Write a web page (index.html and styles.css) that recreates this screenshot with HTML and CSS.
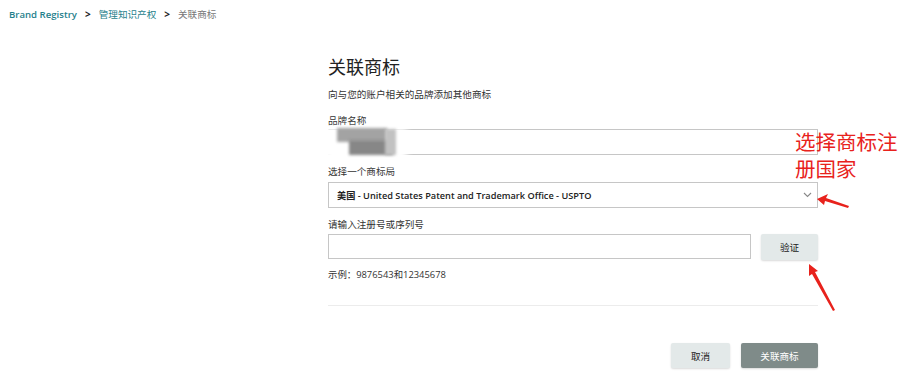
FILE: index.html
```html
<!DOCTYPE html>
<html lang="zh">
<head>
<meta charset="utf-8">
<link rel="stylesheet" href="styles.css">
</head>
<body>
<nav class="crumbs">
  <a class="crumb-link en">Brand Registry</a>
  <span class="sep">&gt;</span>
  <a class="crumb-link">管理知识产权</a>
  <span class="sep">&gt;</span>
  <span class="crumb-cur">关联商标</span>
</nav>
<main class="page">
  <section class="form">
    <h1 class="title">关联商标</h1>
    <p class="sub">向与您的账户相关的品牌添加其他商标</p>
    <label class="lbl first">品牌名称</label>
    <div class="field brand">
      <span class="blur"><i class="b0"></i><i class="b1"></i><i class="b2"></i><i class="b3"></i></span>
    </div>
    <label class="lbl">选择一个商标局</label>
    <div class="field select">
      <span>美国 - United States Patent and Trademark Office - USPTO</span>
      <svg class="chev" width="9" height="6" viewBox="0 0 9 6"><path d="M1 1l3.5 3.5L8 1" fill="none" stroke="#888" stroke-width="1.1"/></svg>
    </div>
    <label class="lbl">请输入注册号或序列号</label>
    <div class="row">
      <div class="field num"></div>
      <button class="btn verify">验证</button>
    </div>
    <p class="hint">示例：9876543和12345678</p>
    <hr class="rule">
    <div class="actions">
      <button class="btn cancel">取消</button>
      <button class="btn primary">关联商标</button>
    </div>
  </section>
</main>
<div class="note">选择商标注<br>册国家</div>
<svg class="arrow a1" width="40" height="20" viewBox="0 0 40 20"><path d="M0 5 L11 0 L9 4 L32 12 L31 14 L8 7 L7 11 Z" fill="#e8221c"/></svg>
<svg class="arrow a2" width="32" height="48" viewBox="0 0 32 48"><path d="M2 0 L11 7 L8 8 L28 46 L26 47 L5 10 L2 12 Z" fill="#e8221c"/></svg>
</body>
</html>
```
FILE: styles.css
```css
* { box-sizing: border-box; }
html, body { margin: 0; padding: 0; background: #fff; }
body {
  width: 899px; height: 387px; overflow: hidden; position: relative;
  font-family: "Noto Sans CJK SC", "Open Sans", sans-serif;
  color: #222;
}
.crumbs {
  display: flex; align-items: center; gap: 5px;
  padding: 6px 0 0 9px; height: 22px;
  font-family: "Open Sans", "Noto Sans CJK SC", sans-serif;
  font-size: 9.6px;
}
.crumb-link { color: #1f7f8c; font-family: "Noto Sans CJK SC", sans-serif; }
.crumb-link.en { font-family: "Open Sans", sans-serif; font-weight: 600; }
.sep { color: #222; font-weight: 700; font-size: 10px; padding: 0 3px; }
.crumb-cur { color: #777; font-family: "Noto Sans CJK SC", sans-serif; }
.page { display: flex; padding-left: 328px; }
.form { width: 490px; display: flex; flex-direction: column; }
.title { margin: 31px 0 0; font-size: 18px; font-weight: 400; line-height: 26px; color: #222; }
.sub { margin: 8px 0 0; font-size: 9.6px; line-height: 14px; color: #333; }
.lbl { margin-top: 9px; font-size: 9.6px; line-height: 14px; color: #333; }
.lbl.first { margin-top: 12px; }
.field {
  height: 26px; border: 1px solid #c6c6c6; background: #fff;
  display: flex; align-items: center;
}
.brand { margin-top: 2px; position: relative; border-left-color: transparent; }
.blur { position: absolute; left: -4px; top: -4px; width: 82px; height: 38px; }
.blur i { position: absolute; display: block; filter: blur(1.5px); }
.b0 { left: 0; top: 2px; width: 82px; height: 36px; background: #fff; filter: blur(3px) !important; }
.b1 { left: 12px; top: 2px; width: 50px; height: 14px; background: #a3a3a3; }
.b2 { left: 24px; top: 14px; width: 44px; height: 15px; background: #878787; }
.b3 { left: 60px; top: 3px; width: 11px; height: 26px; background: #c2c2c2; }
.select { margin-top: 4px; padding: 0 8px; justify-content: space-between;
  font-family: "Open Sans", "Noto Sans CJK SC", sans-serif; font-size: 9.2px; color: #222; font-weight: 600; }
.chev { margin-right: -3px; }
.row { display: flex; gap: 10px; margin-top: 3px; }
.num { flex: 1; height: 25px; }
.btn {
  border: 0; border-radius: 2px; font-family: "Noto Sans CJK SC", sans-serif;
  font-size: 9.6px; height: 26px; box-shadow: 0 1px 2px rgba(0,0,0,0.15);
}
.verify { width: 57px; background: #e3e9e9; color: #222; }
.hint { margin: 8px 0 0; font-family: "Open Sans", "Noto Sans CJK SC", sans-serif; font-size: 9.4px; color: #333; line-height: 14px; }
.rule { margin: 23px 0 0; border: 0; border-top: 1px solid #ececec; width: 490px; }
.actions { display: flex; justify-content: flex-end; gap: 11px; margin-top: 37px; }
.cancel { width: 59px; background: #e3e9e9; color: #222; height: 25px; }
.primary { width: 77px; background: #7f8b89; color: #fff; height: 25px; }
.note {
  position: absolute; left: 795px; top: 128px;
  font-family: "Noto Sans CJK SC", sans-serif; font-size: 20.5px; line-height: 27px;
  color: #e8221c; white-space: nowrap;
}
.arrow { position: absolute; }
.a1 { left: 817px; top: 194px; }
.a2 { left: 807px; top: 264px; }
```
